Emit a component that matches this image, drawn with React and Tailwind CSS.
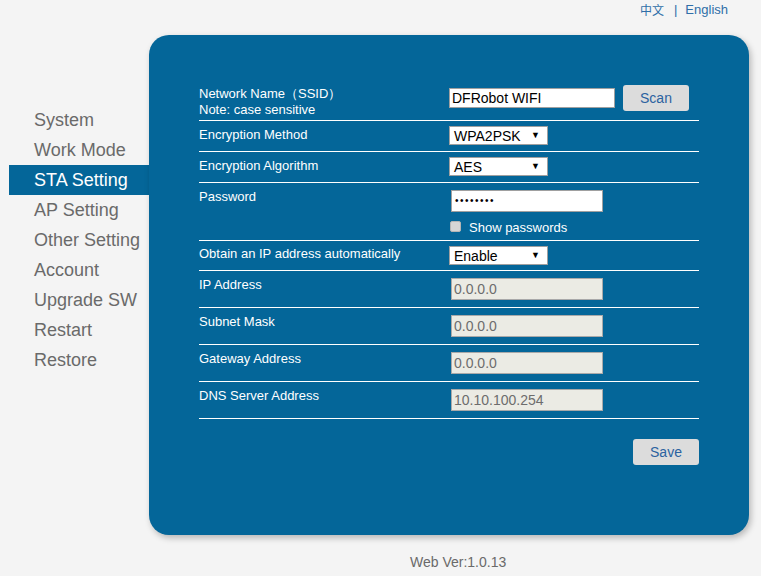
import React from "react";

const NAV = ["System", "Work Mode", "STA Setting", "AP Setting", "Other Setting", "Account", "Upgrade SW", "Restart", "Restore"];

function Select({ value }) {
  return (
    <div className="mt-[5px] w-[99px] h-[19px] bg-white border border-[#a0a0a0] flex items-center justify-between pl-[4px] pr-[7px] text-[14px] text-black leading-none">
      <span>{value}</span>
      <span className="text-[9px]">▼</span>
    </div>
  );
}

function ReadOnly({ value }) {
  return (
    <div className="mt-[7px] ml-[2px] w-[152px] h-[22px] bg-[#ebebe4] border border-[#a9a9a9] flex items-center pl-[2px] text-[14px] text-[#6d6d6d] leading-none">
      {value}
    </div>
  );
}

function Row({ h, label, children, pt = "pt-[6px]" }) {
  return (
    <div className={`flex border-b border-white ${h}`}>
      <div className={`w-[250px] ${pt} text-[13px] leading-[16px] text-white`}>{label}</div>
      <div className="flex-1">{children}</div>
    </div>
  );
}

export default function App() {
  return (
    <div className="w-[761px] h-[576px] bg-[#f4f4f4] overflow-hidden font-['Liberation_Sans',Arial,sans-serif]">
      <div className="h-[35px] flex justify-end pr-[33px] pt-[2px] text-[13px] text-[#2f6ea8] leading-[16px]">
        <span className="font-['Noto_Sans_CJK_SC',sans-serif] text-[12px]">中文</span>
        <span className="ml-[10px]">|</span>
        <span className="ml-[8px]">English</span>
      </div>
      <div className="flex">
        <div className="w-[149px] pt-[70px] pl-[9px]">
          {NAV.map((n) => (
            <div
              key={n}
              className={`h-[30px] pl-[25px] text-[18px] leading-[30px] ${n === "STA Setting" ? "bg-[#046699] text-white" : "text-[#6a6a6a]"}`}
            >
              {n}
            </div>
          ))}
        </div>
        <div className="w-[600px] h-[500px] rounded-[20px] bg-[#046699] shadow-[2px_3px_6px_rgba(0,0,0,0.25)] pt-[50px] px-[50px]">
          <Row
            h="h-[36px]"
            pt="pt-[1px]"
            label={
              <>
                <div>Network Name（SSID）</div>
                <div>Note: case sensitive</div>
              </>
            }
          >
            <div className="flex items-start">
              <div className="mt-[3px] w-[166px] h-[20px] bg-white border border-[#a0a0a0] flex items-center pl-[2px] text-[14px] text-black leading-none">
                DFRobot WIFI
              </div>
              <div className="ml-[8px] w-[66px] h-[26px] rounded-[3px] bg-[#dcdcdc] flex items-center justify-center text-[14px] text-[#2b62a0]">
                Scan
              </div>
            </div>
          </Row>
          <Row h="h-[31px]" label="Encryption Method">
            <Select value="WPA2PSK" />
          </Row>
          <Row h="h-[31px]" label="Encryption Algorithm">
            <Select value="AES" />
          </Row>
          <Row h="h-[58px]" label="Password">
            <div className="mt-[7px] ml-[2px] w-[152px] h-[22px] bg-white border border-[#a0a0a0] flex items-center pl-[3px] text-[10px] text-black leading-none tracking-[1.5px]">
              ••••••••
            </div>
            <div className="flex items-center mt-[4px] ml-[1px]">
              <div className="w-[11px] h-[11px] rounded-[2px] bg-[#d6d6d6] border border-[#b5b5b5]" />
              <span className="ml-[8px] text-[13px] text-white leading-[16px] mt-[4px]">Show passwords</span>
            </div>
          </Row>
          <Row h="h-[30px]" pt="pt-[5px]" label="Obtain an IP address automatically">
            <Select value="Enable" />
          </Row>
          <Row h="h-[37px]" label="IP Address">
            <ReadOnly value="0.0.0.0" />
          </Row>
          <Row h="h-[37px]" label="Subnet Mask">
            <ReadOnly value="0.0.0.0" />
          </Row>
          <Row h="h-[37px]" label="Gateway Address">
            <ReadOnly value="0.0.0.0" />
          </Row>
          <Row h="h-[37px]" label="DNS Server Address">
            <ReadOnly value="10.10.100.254" />
          </Row>
          <div className="flex justify-end pt-[20px]">
            <div className="w-[66px] h-[26px] rounded-[3px] bg-[#dcdcdc] flex items-center justify-center text-[14px] text-[#2b62a0]">
              Save
            </div>
          </div>
        </div>
      </div>
      <div className="pl-[410px] pt-[19px] text-[14px] leading-[16px] text-[#6a6a6a]">Web Ver:1.0.13</div>
    </div>
  );
}
